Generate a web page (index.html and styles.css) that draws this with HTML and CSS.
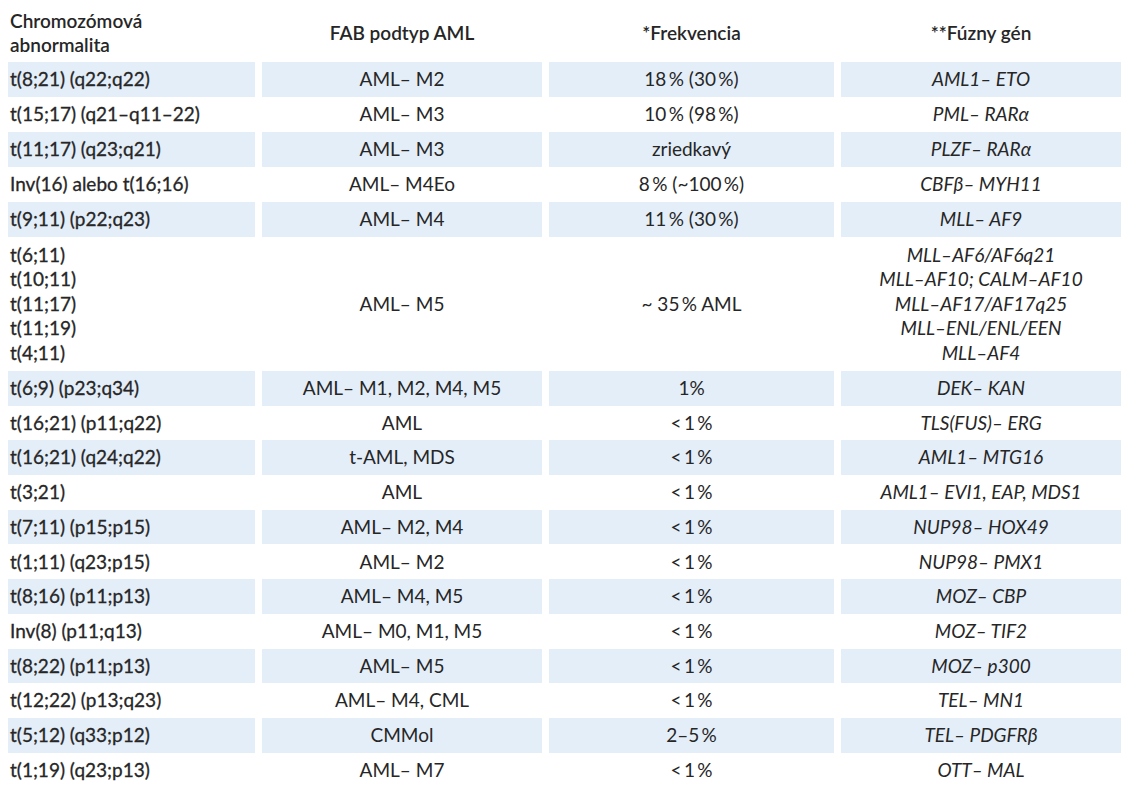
FILE: index.html
```html
<!DOCTYPE html>
<html lang="sk">
<head>
<meta charset="utf-8">
<title>Chromozómové abnormality pri AML</title>
<link rel="stylesheet" href="styles.css">
</head>
<body>
<div class="tbl">
  <div class="c h c1">Chromozómová<br>abnormalita</div>
  <div class="c h">FAB podtyp AML</div>
  <div class="c h">*Frekvencia</div>
  <div class="c h">**Fúzny gén</div>

  <div class="c c1 b">t(8;21) (q22;q22)</div>
  <div class="c b">AML– M2</div>
  <div class="c b">18&#8201;% (30&#8201;%)</div>
  <div class="c c4 b">AML1– ETO</div>

  <div class="c c1">t(15;17) (q21–q11–22)</div>
  <div class="c">AML– M3</div>
  <div class="c">10&#8201;% (98&#8201;%)</div>
  <div class="c c4">PML– RARα</div>

  <div class="c c1 b">t(11;17) (q23;q21)</div>
  <div class="c b">AML– M3</div>
  <div class="c b">zriedkavý</div>
  <div class="c c4 b">PLZF– RARα</div>

  <div class="c c1">Inv(16) alebo t(16;16)</div>
  <div class="c">AML– M4Eo</div>
  <div class="c">8&#8201;% (~100&#8201;%)</div>
  <div class="c c4">CBFβ– MYH11</div>

  <div class="c c1 b">t(9;11) (p22;q23)</div>
  <div class="c b">AML– M4</div>
  <div class="c b">11&#8201;% (30&#8201;%)</div>
  <div class="c c4 b">MLL– AF9</div>

  <div class="c c1">t(6;11)<br>t(10;11)<br>t(11;17)<br>t(11;19)<br>t(4;11)</div>
  <div class="c">AML– M5</div>
  <div class="c">~ 35&#8201;% AML</div>
  <div class="c c4">MLL–AF6/AF6q21<br>MLL–AF10; CALM–AF10<br>MLL–AF17/AF17q25<br>MLL–ENL/ENL/EEN<br>MLL–AF4</div>

  <div class="c c1 b">t(6;9) (p23;q34)</div>
  <div class="c b">AML– M1, M2, M4, M5</div>
  <div class="c b">1%</div>
  <div class="c c4 b">DEK– KAN</div>

  <div class="c c1">t(16;21) (p11;q22)</div>
  <div class="c">AML</div>
  <div class="c">&lt;&#8201;1&#8201;%</div>
  <div class="c c4">TLS(FUS)– ERG</div>

  <div class="c c1 b">t(16;21) (q24;q22)</div>
  <div class="c b">t-AML, MDS</div>
  <div class="c b">&lt;&#8201;1&#8201;%</div>
  <div class="c c4 b">AML1– MTG16</div>

  <div class="c c1">t(3;21)</div>
  <div class="c">AML</div>
  <div class="c">&lt;&#8201;1&#8201;%</div>
  <div class="c c4">AML1– EVI1, EAP, MDS1</div>

  <div class="c c1 b">t(7;11) (p15;p15)</div>
  <div class="c b">AML– M2, M4</div>
  <div class="c b">&lt;&#8201;1&#8201;%</div>
  <div class="c c4 b">NUP98– HOX49</div>

  <div class="c c1">t(1;11) (q23;p15)</div>
  <div class="c">AML– M2</div>
  <div class="c">&lt;&#8201;1&#8201;%</div>
  <div class="c c4">NUP98– PMX1</div>

  <div class="c c1 b">t(8;16) (p11;p13)</div>
  <div class="c b">AML– M4, M5</div>
  <div class="c b">&lt;&#8201;1&#8201;%</div>
  <div class="c c4 b">MOZ– CBP</div>

  <div class="c c1">Inv(8) (p11;q13)</div>
  <div class="c">AML– M0, M1, M5</div>
  <div class="c">&lt;&#8201;1&#8201;%</div>
  <div class="c c4">MOZ– TIF2</div>

  <div class="c c1 b">t(8;22) (p11;p13)</div>
  <div class="c b">AML– M5</div>
  <div class="c b">&lt;&#8201;1&#8201;%</div>
  <div class="c c4 b">MOZ– p300</div>

  <div class="c c1">t(12;22) (p13;q23)</div>
  <div class="c">AML– M4, CML</div>
  <div class="c">&lt;&#8201;1&#8201;%</div>
  <div class="c c4">TEL– MN1</div>

  <div class="c c1 b">t(5;12) (q33;p12)</div>
  <div class="c b">CMMol</div>
  <div class="c b">2–5&#8201;%</div>
  <div class="c c4 b">TEL– PDGFRβ</div>

  <div class="c c1">t(1;19) (q23;p13)</div>
  <div class="c">AML– M7</div>
  <div class="c">&lt;&#8201;1&#8201;%</div>
  <div class="c c4">OTT– MAL</div>
</div>
</body>
</html>
```
FILE: styles.css
```css
html, body {
  margin: 0;
  padding: 0;
  background: #ffffff;
}

body {
  font-family: Lato, "Open Sans", "Liberation Sans", sans-serif;
  font-size: 19px;
  color: #262626;
}

.tbl {
  display: grid;
  grid-template-columns: 247px 280px 285px 280px;
  grid-template-rows: 62px repeat(5, 35px) 134px repeat(12, 34.7px);
  column-gap: 7px;
  padding-left: 8px;
}

.c {
  display: flex;
  align-items: center;
  justify-content: center;
  text-align: center;
  padding: 0 2px;
  white-space: nowrap;
  line-height: 24.5px;
}

.c1 {
  justify-content: flex-start;
  text-align: left;
  -webkit-text-stroke: 0.3px currentColor;
}

.c4 {
  font-style: italic;
}

.b {
  background: #e4eef9;
}

.h {
  font-weight: 600;
  padding-top: 4px;
  -webkit-text-stroke: 0;
}
```
